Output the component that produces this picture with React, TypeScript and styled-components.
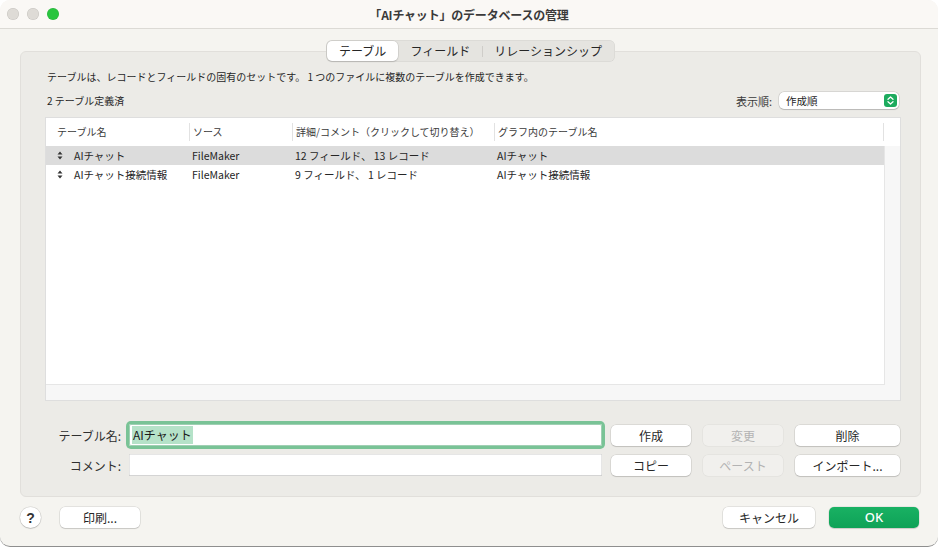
import React from "react";
import styled, { createGlobalStyle } from "styled-components";

const Global = createGlobalStyle`
  html, body { margin: 0; padding: 0; background: #ffffff; }
  body {
    font-family: "Noto Sans CJK JP", "Noto Sans", sans-serif;
    color: #262626;
    -webkit-font-smoothing: antialiased;
  }
  * { box-sizing: border-box; }
`;

const Window = styled.div`
  width: 938px;
  height: 547px;
  background: #f5f4f0;
  border-radius: 10px;
  border-bottom: 1px solid #8e8e8e;
  overflow: hidden;
  display: flex;
  flex-direction: column;
`;

const TitleBar = styled.div`
  height: 29px;
  flex: none;
  background: #faf8f5;
  border-bottom: 1px solid #dcdad5;
  display: grid;
  grid-template-columns: 1fr auto 1fr;
  align-items: center;
  padding: 0 7px;
`;

const Lights = styled.div`
  display: flex;
  gap: 8px;
`;

const Light = styled.span<{ $color: string; $border: string }>`
  width: 12px;
  height: 12px;
  border-radius: 50%;
  background: ${(p) => p.$color};
  box-shadow: inset 0 0 0 0.5px ${(p) => p.$border};
`;

const Title = styled.div`
  font-size: 12px;
  font-weight: 700;
  color: #3a3a3a;
  letter-spacing: -0.2px;
`;

const Content = styled.div`
  flex: 1;
  display: flex;
  flex-direction: column;
  padding: 11px 17px 0 20px;
`;

const TabsWrap = styled.div`
  position: relative;
  z-index: 1;
  display: flex;
  justify-content: center;
  margin-bottom: -11px;
`;

const Tabs = styled.div`
  display: flex;
  align-items: center;
  height: 22px;
  padding: 1px;
  background: #e5e4e0;
  border-radius: 6px;
  box-shadow: inset 0 0 0 0.5px rgba(0, 0, 0, 0.08);
`;

const Tab = styled.div<{ $active?: boolean; $divider?: boolean }>`
  position: relative;
  height: 20px;
  line-height: 20px;
  padding: 0 12px;
  font-size: 12px;
  color: #262626;
  border-radius: 5px;
  background: ${(p) => (p.$active ? "#ffffff" : "transparent")};
  box-shadow: ${(p) =>
    p.$active ? "0 0 0 0.5px rgba(0,0,0,0.12), 0 1px 1.5px rgba(0,0,0,0.12)" : "none"};
  &::before {
    content: "";
    display: ${(p) => (p.$divider ? "block" : "none")};
    position: absolute;
    left: 0;
    top: 5px;
    width: 1px;
    height: 11px;
    background: #cfcdc9;
  }
`;

const Panel = styled.div`
  height: 446px;
  flex: none;
  background: #ecebe7;
  border: 1px solid #e1dfdb;
  border-radius: 6px;
  padding-top: 17px;
  display: flex;
  flex-direction: column;
`;

const Desc = styled.div`
  font-size: 10px;
  line-height: 16px;
  margin-left: 26px;
  color: #262626;
`;

const InfoRow = styled.div`
  margin-top: 7px;
  height: 17px;
  display: flex;
  align-items: center;
  justify-content: space-between;
  padding: 0 21px 0 26px;
  font-size: 10px;
`;

const SortGroup = styled.div`
  display: flex;
  align-items: center;
  gap: 7px;
`;

const SortLabel = styled.span`
  font-size: 11px;
  color: #3a3a3a;
`;

const Select = styled.div`
  width: 120px;
  height: 17px;
  background: #ffffff;
  border-radius: 5px;
  box-shadow: 0 0 0 0.5px rgba(0, 0, 0, 0.15), 0 0.5px 1px rgba(0, 0, 0, 0.15);
  display: flex;
  align-items: center;
  justify-content: space-between;
  padding: 0 2px 0 7px;
  font-size: 10.5px;
`;

const ListFrame = styled.div`
  margin: 8px 19px 0 24px;
  height: 284px;
  flex: none;
  border: 1px solid #dedede;
  background: #f7f7f7;
  display: grid;
  grid-template-columns: 1fr 15px;
  grid-template-rows: 28px 1fr 15px;
`;

const cols = "143px 103px 202px 390px";

const Header = styled.div`
  grid-column: 1 / -1;
  background: #ffffff;
  display: grid;
  grid-template-columns: ${cols};
  align-items: center;
`;

const HeaderCell = styled.div<{ $first?: boolean; $last?: boolean }>`
  height: 18px;
  line-height: 18px;
  font-size: 10px;
  color: #3a3a3a;
  padding-left: ${(p) => (p.$first ? "11px" : "3px")};
  border-left: ${(p) => (p.$first ? "none" : "1px solid #e2e2e2")};
  border-right: ${(p) => (p.$last ? "1px solid #e2e2e2" : "none")};
  white-space: nowrap;
`;

const Rows = styled.div`
  background: #ffffff;
  border-right: 1px solid #e6e6e6;
  border-bottom: 1px solid #e6e6e6;
`;

const Track = styled.div<{ $wide?: boolean }>`
  grid-column: ${(p) => (p.$wide ? "1 / -1" : "auto")};
  background: #f7f7f7;
`;

const Row = styled.div<{ $selected?: boolean }>`
  display: grid;
  grid-template-columns: ${cols};
  height: 19px;
  align-items: center;
  background: ${(p) => (p.$selected ? "#dcdcdc" : "transparent")};
  font-size: 10.5px;
  color: #262626;
`;

const Cell = styled.div<{ $first?: boolean }>`
  display: flex;
  align-items: center;
  gap: 11px;
  padding-left: ${(p) => (p.$first ? "11px" : "3px")};
  white-space: nowrap;
`;

const Form = styled.div`
  margin-top: 23px;
  display: flex;
  flex-direction: column;
  gap: 8px;
`;

const FormRow = styled.div`
  display: flex;
  align-items: center;
  height: 22px;
`;

const FieldLabel = styled.div`
  width: 100px;
  text-align: right;
  font-size: 12px;
  color: #2f2f2f;
`;

const TextBox = styled.div<{ $focused?: boolean }>`
  margin-left: 8px;
  width: 473px;
  height: 22px;
  background: #ffffff;
  border-radius: ${(p) => (p.$focused ? "2px" : "1px")};
  box-shadow: ${(p) =>
    p.$focused
      ? "0 0 0 3px #79c396, inset 0 0 0 1px #9fcfb3"
      : "inset 0 0 0 0.5px rgba(0,0,0,0.2), inset 0 -1px 0 rgba(0,0,0,0.08)"};
  display: flex;
  align-items: center;
  padding: 0 3px;
  font-size: 12px;
`;

const Selection = styled.span`
  background: #b5e2c8;
  line-height: 18px;
  padding: 0 1px;
  color: #1a1a1a;
`;

const ButtonGroup = styled.div`
  margin-left: 9px;
  display: grid;
  grid-template-columns: 80px 80px 105px;
  column-gap: 12px;
`;

const Button = styled.div<{ $disabled?: boolean; $width?: number }>`
  width: ${(p) => (p.$width ? `${p.$width}px` : "auto")};
  height: 21px;
  line-height: 21px;
  text-align: center;
  font-size: 12px;
  border-radius: 5px;
  color: ${(p) => (p.$disabled ? "#b3b3b3" : "#262626")};
  background: ${(p) => (p.$disabled ? "#f1f0ed" : "#ffffff")};
  box-shadow: ${(p) =>
    p.$disabled
      ? "0 0 0 0.5px rgba(0,0,0,0.06)"
      : "0 0 0 0.5px rgba(0,0,0,0.14), 0 1px 1px rgba(0,0,0,0.12)"};
  white-space: nowrap;
`;

const BottomBar = styled.div`
  display: flex;
  align-items: center;
  padding: 10px 2px 0 0;
`;

const Help = styled.div`
  width: 21px;
  height: 21px;
  border-radius: 50%;
  background: #ffffff;
  box-shadow: 0 0 0 0.5px rgba(0, 0, 0, 0.14), 0 1px 1px rgba(0, 0, 0, 0.14);
  display: flex;
  align-items: center;
  justify-content: center;
  font-family: "Liberation Sans", "Noto Sans", sans-serif;
  font-size: 14px;
  font-weight: 700;
  color: #333;
`;

const PrintButton = styled(Button)`
  margin-left: 19px;
`;

const Spacer = styled.div`
  flex: 1;
`;

const OkButton = styled.div`
  margin-left: 14px;
  width: 90px;
  height: 21px;
  line-height: 21px;
  text-align: center;
  border-radius: 5px;
  background: linear-gradient(#19b163, #0ea257);
  box-shadow: 0 0 0 0.5px rgba(0, 0, 0, 0.1), 0 1px 1px rgba(0, 0, 0, 0.12);
  color: #ffffff;
  font-family: "Noto Sans", sans-serif;
  font-size: 13px;
  font-weight: 500;
`;

const SortIcon = () => (
  <svg width="6" height="9" viewBox="0 0 6 9">
    <path d="M3 0.5 L5.5 3.5 H0.5 Z M0.5 5.5 H5.5 L3 8.5 Z" fill="#333" />
  </svg>
);

const Stepper = () => (
  <svg width="13" height="13" viewBox="0 0 13 13">
    <rect x="0" y="0" width="13" height="13" rx="3" fill="#1dab5e" />
    <path
      d="M4 5.2 L6.5 3 L9 5.2 M4 7.8 L6.5 10 L9 7.8"
      fill="none"
      stroke="#fff"
      strokeWidth="1.3"
      strokeLinecap="round"
      strokeLinejoin="round"
    />
  </svg>
);

const tables = [
  { name: "AIチャット", source: "FileMaker", detail: "12 フィールド、 13 レコード", graph: "AIチャット" },
  { name: "AIチャット接続情報", source: "FileMaker", detail: "9 フィールド、 1 レコード", graph: "AIチャット接続情報" },
];

export default function App() {
  return (
    <>
      <Global />
      <Window>
        <TitleBar>
          <Lights>
            <Light $color="#dedbd6" $border="rgba(0,0,0,0.12)" />
            <Light $color="#dedbd6" $border="rgba(0,0,0,0.12)" />
            <Light $color="#29c53f" $border="rgba(0,0,0,0.1)" />
          </Lights>
          <Title>「AIチャット」のデータベースの管理</Title>
          <div />
        </TitleBar>
        <Content>
          <TabsWrap>
            <Tabs>
              <Tab $active>テーブル</Tab>
              <Tab>フィールド</Tab>
              <Tab $divider>リレーションシップ</Tab>
            </Tabs>
          </TabsWrap>
          <Panel>
            <Desc>
              テーブルは、レコードとフィールドの固有のセットです。 1 つのファイルに複数のテーブルを作成できます。
            </Desc>
            <InfoRow>
              <span>2 テーブル定義済</span>
              <SortGroup>
                <SortLabel>表示順:</SortLabel>
                <Select>
                  <span>作成順</span>
                  <Stepper />
                </Select>
              </SortGroup>
            </InfoRow>
            <ListFrame>
              <Header>
                <HeaderCell $first>テーブル名</HeaderCell>
                <HeaderCell>ソース</HeaderCell>
                <HeaderCell>詳細/コメント（クリックして切り替え）</HeaderCell>
                <HeaderCell $last>グラフ内のテーブル名</HeaderCell>
              </Header>
              <Rows>
                {tables.map((t, i) => (
                  <Row key={t.name} $selected={i === 0}>
                    <Cell $first>
                      <SortIcon />
                      <span>{t.name}</span>
                    </Cell>
                    <Cell>{t.source}</Cell>
                    <Cell>{t.detail}</Cell>
                    <Cell>{t.graph}</Cell>
                  </Row>
                ))}
              </Rows>
              <Track />
              <Track $wide />
            </ListFrame>
            <Form>
              <FormRow>
                <FieldLabel>テーブル名:</FieldLabel>
                <TextBox $focused>
                  <Selection>AIチャット</Selection>
                </TextBox>
                <ButtonGroup>
                  <Button>作成</Button>
                  <Button $disabled>変更</Button>
                  <Button>削除</Button>
                </ButtonGroup>
              </FormRow>
              <FormRow>
                <FieldLabel>コメント:</FieldLabel>
                <TextBox />
                <ButtonGroup>
                  <Button>コピー</Button>
                  <Button $disabled>ペースト</Button>
                  <Button>インポート...</Button>
                </ButtonGroup>
              </FormRow>
            </Form>
          </Panel>
          <BottomBar>
            <Help>?</Help>
            <PrintButton $width={80}>印刷...</PrintButton>
            <Spacer />
            <Button $width={92}>キャンセル</Button>
            <OkButton>OK</OkButton>
          </BottomBar>
        </Content>
      </Window>
    </>
  );
}
